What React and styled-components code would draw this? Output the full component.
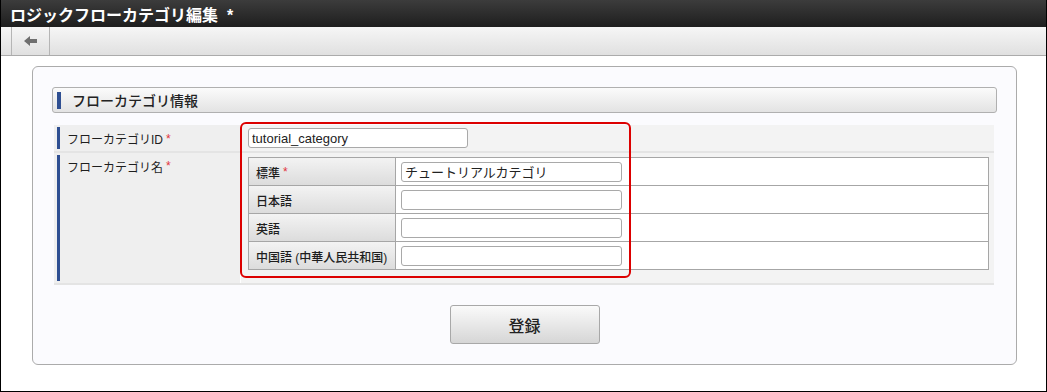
import React from 'react'
import styled, { createGlobalStyle } from 'styled-components'

const GlobalStyle = createGlobalStyle`
  html, body {
    margin: 0;
    padding: 0;
    background: #fff;
  }
  body {
    font-family: "Liberation Sans", "Noto Sans CJK JP", sans-serif;
    color: #333;
  }
`;

const Frame = styled.div`
  width: 1047px;
  height: 392px;
  box-sizing: border-box;
  border: 1px solid #000;
  border-top: none;
  background: #fff;
  overflow: hidden;
`;

const TitleBar = styled.div`
  height: 27px;
  background: linear-gradient(#3c3c3c, #1e1e1e);
  color: #fff;
  font-size: 16px;
  font-weight: bold;
  display: flex;
  align-items: center;
  padding-left: 9px;
`;

const Toolbar = styled.div`
  height: 28px;
  background: linear-gradient(#f6f6f6, #e0e0e0);
  border-bottom: 1px solid #ababab;
  display: flex;
  padding-left: 10px;
`;

const ToolButton = styled.div`
  width: 37px;
  border-left: 1px solid #b5b5b5;
  border-right: 1px solid #b5b5b5;
  display: flex;
  align-items: center;
  justify-content: center;
`;

const Panel = styled.div`
  margin: 10px 29px 0 31px;
  border: 1px solid #ababab;
  border-radius: 6px;
  background: #fbfbfe;
  padding: 20px 19px 20px 19px;
`;

const SectionHeader = styled.div`
  height: 24px;
  border: 1px solid #b0b0b0;
  border-radius: 3px;
  background: linear-gradient(#fbfbfb, #e3e3e3);
  display: flex;
  align-items: center;
  font-size: 14px;
  font-weight: 500;
  color: #222;
  &::before {
    content: '';
    width: 4px;
    height: 17px;
    background: #2f4f92;
    margin: 0 11px 0 4px;
  }
`;

const FormArea = styled.div`
  position: relative;
  margin: 12px 3px 0 2px;
`;

const Row = styled.div`
  display: flex;
  border-bottom: 2px solid #e4e4e4;
  background: #f3f3f3;
`;

const LabelCell = styled.div`
  width: 186px;
  flex-shrink: 0;
  padding: 2px 0 2px 3px;
  box-sizing: border-box;
  background: #efefef;
  display: flex;
`;

const LabelInner = styled.div`
  flex: 1;
  border-left: 3px solid #2f4f92;
  padding: ${(props) => (props.top ? '3px' : '0')} 0 0 7px;
  font-size: 12px;
  color: #1e1e1e;
  display: flex;
  align-items: ${(props) => (props.top ? 'flex-start' : 'center')};
`;

const Req = styled.span`
  color: #e2343b;
  font-size: 12px;
  margin-left: 3px;
  position: relative;
  top: 1px;
`;

const ValueCell = styled.div`
  flex: 1;
  padding: ${(props) => props.pad};
  border-left: 1px solid #fff;
`;

const TextInput = styled.input`
  box-sizing: border-box;
  width: ${(props) => props.w}px;
  height: 20px;
  border: 1px solid #a9a9a9;
  border-radius: 3px;
  background: #fff;
  font-family: "Liberation Sans", "Noto Sans CJK JP", sans-serif;
  font-size: 13px;
  color: #222;
  padding: 0 3px;
  display: block;
  outline: none;
`;

const LangTable = styled.div`
  border: 1px solid #a6a6a6;
  background: #fff;
`;

const LangRow = styled.div`
  display: flex;
  height: 27px;
  & + & {
    border-top: 1px solid #a6a6a6;
  }
`;

const LangLabel = styled.div`
  width: 147px;
  flex-shrink: 0;
  border-right: 1px solid #a6a6a6;
  background: linear-gradient(#f3f3f3, #dcdcdc);
  font-size: 12px;
  font-weight: 500;
  color: #1e1e1e;
  padding: 6px 0 0 7px;
  box-sizing: border-box;
  display: flex;
`;

const LangValue = styled.div`
  flex: 1;
  display: flex;
  align-items: center;
  padding-left: 5px;
`;

const Highlight = styled.div`
  position: absolute;
  left: 186px;
  top: -3px;
  width: 391px;
  height: 156px;
  box-sizing: border-box;
  border: 2px solid #dc0000;
  border-radius: 6px;
  pointer-events: none;
`;

const ButtonRow = styled.div`
  display: flex;
  justify-content: center;
  margin-top: 20px;
`;

const SubmitButton = styled.button`
  width: 150px;
  height: 39px;
  border: 1px solid #a8a8a8;
  border-radius: 3px;
  background: linear-gradient(#fafafa, #d6d6d6);
  font-family: "Noto Sans CJK JP", sans-serif;
  font-size: 16px;
  font-weight: 500;
  color: #222;
  cursor: pointer;
`;

const BackArrow = () => (
  <svg width="14" height="10" viewBox="0 0 14 10">
    <path d="M0 5 L6 0 L6 3 L13 3 L13 7 L6 7 L6 10 Z" fill="#6f6f6f" />
  </svg>
);

const langs = [
  { label: '標準', required: true, value: 'チュートリアルカテゴリ' },
  { label: '日本語', value: '' },
  { label: '英語', value: '' },
  { label: '中国語 (中華人民共和国)', value: '' },
];

const App = () => {
  return (
    <Frame>
      <GlobalStyle />
      <TitleBar>ロジックフローカテゴリ編集 &nbsp;*</TitleBar>
      <Toolbar>
        <ToolButton>
          <BackArrow />
        </ToolButton>
      </Toolbar>
      <Panel>
        <SectionHeader>フローカテゴリ情報</SectionHeader>
        <FormArea>
          <Row>
            <LabelCell style={{ height: 26 }}>
              <LabelInner>
                フローカテゴリID<Req>*</Req>
              </LabelInner>
            </LabelCell>
            <ValueCell pad="3px 0 0 7px">
              <TextInput w={220} defaultValue="tutorial_category" />
            </ValueCell>
          </Row>
          <Row>
            <LabelCell>
              <LabelInner top>
                フローカテゴリ名<Req>*</Req>
              </LabelInner>
            </LabelCell>
            <ValueCell pad="4px 5px 13px 7px">
              <LangTable>
                {langs.map((l) => (
                  <LangRow key={l.label}>
                    <LangLabel>
                      {l.label}
                      {l.required && <Req>*</Req>}
                    </LangLabel>
                    <LangValue>
                      <TextInput w={221} defaultValue={l.value} />
                    </LangValue>
                  </LangRow>
                ))}
              </LangTable>
            </ValueCell>
          </Row>
          <Highlight />
        </FormArea>
        <ButtonRow>
          <SubmitButton>登録</SubmitButton>
        </ButtonRow>
      </Panel>
    </Frame>
  )
}

export default App
